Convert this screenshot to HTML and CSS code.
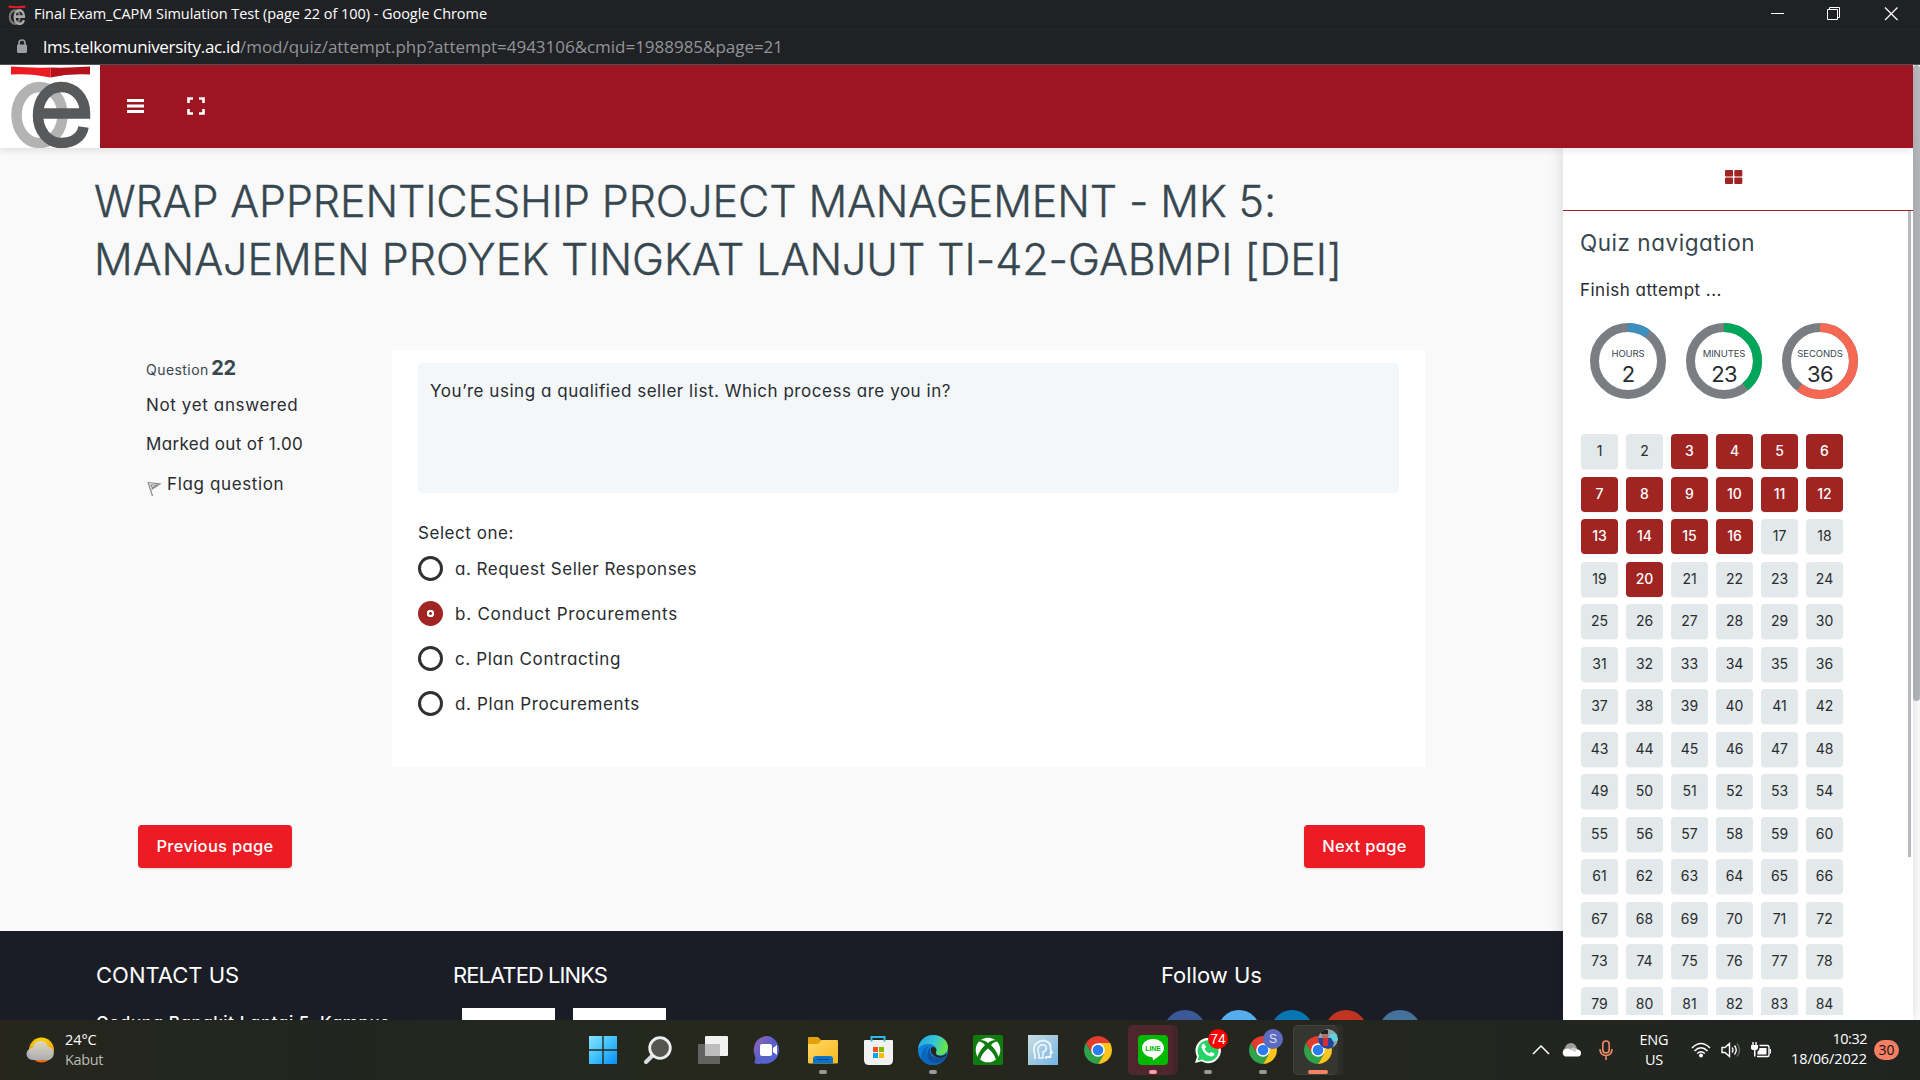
FILE: index.html
```html
<!DOCTYPE html>
<html lang="en">
<head>
<meta charset="utf-8">
<title>Final Exam_CAPM Simulation Test (page 22 of 100)</title>
<link rel="stylesheet" href="styles.css">
</head>
<body>
<svg class="defs" width="0" height="0" aria-hidden="true">
  <symbol id="logo" viewBox="0 0 100 83">
    <path d="M11 1.5Q30 3 50.500 2.500L50.500 12.500Q30 8 11 9.500Z" fill="#ed1c24"/>
    <path d="M50.500 2.500Q70 3 90 1.500V9.500Q70 8 50.500 12.500Z" fill="#b5121b"/>
    <ellipse cx="39.500" cy="50" rx="23" ry="28" fill="none" stroke="#b3b3b3" stroke-width="10.500"/>
    <path d="M39 48.500H85C85 32 74 22 61 22C48 22 38 34 38 50C38 66 48 78 61 78C73 78 82 72 83.500 62" fill="none" stroke="#58595b" stroke-width="10.500"/>
  </symbol>
  <symbol id="chrome" viewBox="-14 -14 28 28">
    <path d="M-12.100-7A14 14 0 0 1 12.100-7H0L-6.060 3.500Z" fill="#e33b2e"/>
    <path d="M12.100-7A14 14 0 0 1 0 14L6.060 3.500 0-7Z" fill="#fdc51c"/>
    <path d="M0 14A14 14 0 0 1-12.100-7L-6.060 3.500H6.060Z" fill="#2fa24c"/>
    <circle r="6.800" fill="#fff"/><circle r="5.300" fill="#2a7cf0"/>
  </symbol>
</svg>

<div class="titlebar">
  <svg class="favicon" width="20" height="20" viewBox="0 0 100 83" preserveAspectRatio="none"><path d="M8 2L50 5L92 2V11L50 14L8 11Z" fill="#e31b23"/><ellipse cx="39" cy="50" rx="25" ry="27" fill="none" stroke="#777" stroke-width="11"/><path d="M39 48H85C85 32 74 22 61 22C48 22 38 34 38 50C38 66 48 78 61 78C73 78 82 72 84 62" fill="none" stroke="#aaa" stroke-width="11"/></svg>
  <span class="win-title">Final Exam_CAPM Simulation Test (page 22 of 100) - Google Chrome</span>
  <svg class="win-ctl" width="130" height="16" viewBox="0 0 130 16" fill="none" stroke="#fff"><path d="M1 7.500H14M57.500 3.500H67.500V13.500H57.500ZM59.500 3V1.500H69.500V11.500H68"/><path d="M115 1.500L127.500 14M127.500 1.500L115 14" stroke-width="1.200"/></svg>
</div>
<div class="urlbar">
  <svg width="12" height="15" viewBox="0 0 12 15"><path d="M3 6V4a3 3 0 0 1 6 0V6" fill="none" stroke="#9aa0a6" stroke-width="1.600"/><rect x="1" y="5.500" width="10" height="8.500" rx="1.200" fill="#9aa0a6"/></svg>
  <span class="url-host">lms.telkomuniversity.ac.id</span><span class="url-path">/mod/quiz/attempt.php?attempt=4943106&amp;cmid=1988985&amp;page=21</span>
</div>

<div class="viewport">
  <div class="page">
    <header class="topbar">
      <div class="brand"><svg width="100" height="83"><use href="#logo"/></svg></div>
      <svg class="menu" width="17" height="14" viewBox="0 0 17 14"><path d="M0 1.500H17M0 7H17M0 12.500H17" stroke="#fff" stroke-width="2.800"/></svg>
      <svg class="full" width="18" height="18" viewBox="0 0 18 18"><path d="M1.500 6V1.500H6M12 1.500H16.500V6M16.500 12V16.500H12M6 16.500H1.500V12" fill="none" stroke="#fff" stroke-width="2.600"/></svg>
    </header>
    <div class="columns">
      <main class="main">
        <h1 class="course"><span class="course-a">WRAP APPRENTICESHIP PROJECT MANAGEMENT - MK 5:</span><br><span class="course-b">MANAJEMEN PROYEK TINGKAT LANJUT TI-42-GABMPI [DEI]</span></h1>
        <div class="question">
          <div class="info">
            <div class="qno"><span class="q-word">Question</span> <b class="q-num">22</b></div>
            <div class="line"><span class="state">Not yet answered</span></div>
            <div class="line"><span class="grade">Marked out of 1.00</span></div>
            <div class="line flag"><svg width="15" height="17" viewBox="0 0 15 17" fill="none" stroke="#888" stroke-width="1.200"><path d="M1 2L5.500 16M1.500 2.500L13 4 4.500 9.500M4 5L10 5 5.500 8Z"/></svg><span>Flag question</span></div>
          </div>
          <div class="card">
            <div class="stem"><span>You’re using a qualified seller list. Which process are you in?</span></div>
            <div class="prompt"><span>Select one:</span></div>
            <div class="option"><i class="radio"></i><span class="opt-a">a. Request Seller Responses</span></div>
            <div class="option"><i class="radio on"></i><span class="opt-b">b. Conduct Procurements</span></div>
            <div class="option"><i class="radio"></i><span>c. Plan Contracting</span></div>
            <div class="option"><i class="radio"></i><span>d. Plan Procurements</span></div>
          </div>
        </div>
        <div class="pager"><div class="btn prev">Previous page</div><div class="btn next">Next page</div></div>
        <footer class="footer">
          <section class="contact"><h3>CONTACT US</h3><p>Gedung Bangkit Lantai 5, Kampus</p></section>
          <section class="links"><h3>RELATED LINKS</h3><div class="logos"><i></i><i></i></div></section>
          <section class="social"><h3>Follow Us</h3><div class="circles"><i class="fb"></i><i class="tw"></i><i class="in"></i><i class="gp"></i><i class="vk"></i></div></section>
        </footer>
      </main>
      <aside class="side">
        <div class="tabs"><svg width="18" height="14" viewBox="0 0 18 14" fill="#a02422"><rect width="8" height="6.400" rx="1"/><rect x="9.300" width="8" height="6.400" rx="1"/><rect y="7.600" width="8" height="6.400" rx="1"/><rect x="9.300" y="7.600" width="8" height="6.400" rx="1"/></svg></div>
        <div class="side-body">
          <h2>Quiz navigation</h2>
          <p class="finish">Finish attempt ...</p>
          <div class="timers">
            <div class="timer"><svg width="76" height="76" viewBox="0 0 76 76"><circle class="ring" cx="38" cy="38" r="33.500"/><circle class="arc hours" cx="38" cy="38" r="33.500" pathLength="100" stroke-dasharray="10 90"/></svg><small>HOURS</small><strong>2</strong></div>
            <div class="timer"><svg width="76" height="76" viewBox="0 0 76 76"><circle class="ring" cx="38" cy="38" r="33.500"/><circle class="arc minutes" cx="38" cy="38" r="33.500" pathLength="100" stroke-dasharray="39 61"/></svg><small>MINUTES</small><strong>23</strong></div>
            <div class="timer"><svg width="76" height="76" viewBox="0 0 76 76"><circle class="ring" cx="38" cy="38" r="33.500"/><circle class="arc seconds" cx="38" cy="38" r="33.500" pathLength="100" stroke-dasharray="60.500 39.500"/></svg><small>SECONDS</small><strong>36</strong></div>
          </div>
          <div class="qgrid" id="qgrid"></div>
        </div>
        <i class="side-thumb"></i>
      </aside>
    </div>
  </div>
  <div class="scroll"><i></i></div>
</div>

<div class="taskbar">
  <div class="weather">
    <svg width="30" height="28" viewBox="0 0 30 28"><defs><linearGradient id="sun" x2="0" y2="1"><stop stop-color="#ffd400"/><stop offset="1" stop-color="#f0641e"/></linearGradient><linearGradient id="cl" x2="0" y2="1"><stop stop-color="#d9dcc8"/><stop offset="1" stop-color="#a9b0bd"/></linearGradient></defs><circle cx="15.500" cy="14" r="12.500" fill="url(#sun)"/><path d="M6.500 24a6 6 0 0 1 0-12 8 8 0 0 1 15.500-1.500 7 7 0 0 1 1 13.500Z" fill="url(#cl)" opacity=".93"/></svg>
    <div class="wtext"><span>24°C</span><br><span class="cond">Kabut</span></div>
  </div>
  <div class="apps">
    <div class="app"><svg width="30" height="30" viewBox="0 0 30 30"><defs><linearGradient id="win" x2="1" y2="1"><stop stop-color="#8ae2fb"/><stop offset=".5" stop-color="#3fc0fb"/><stop offset="1" stop-color="#0a8df5"/></linearGradient></defs><path d="M1 1H14.300V14.300H1ZM15.700 1H29V14.300H15.700ZM1 15.700H14.300V29H1ZM15.700 15.700H29V29H15.700Z" fill="url(#win)"/></svg></div>
    <div class="app"><svg width="30" height="30" viewBox="0 0 30 30"><path d="M10 20L3 27" stroke="#d9dbdd" stroke-width="4" stroke-linecap="round"/><circle cx="17" cy="13" r="10.300" fill="#54564f" stroke="#eceef0" stroke-width="2.800"/></svg></div>
    <div class="app"><svg width="30" height="30" viewBox="0 0 30 30"><rect y="9" width="22" height="20" rx="1" fill="#626261"/><rect x="7" y="1" width="23" height="20" rx="1" fill="#f1f1f1"/><path d="M7 9H22V21H7Z" fill="#bdbdbd"/></svg></div>
    <div class="app"><svg width="30" height="30" viewBox="0 0 30 30"><defs><linearGradient id="tm" x2="1" y2="1"><stop stop-color="#9a63b8"/><stop offset=".5" stop-color="#5b5fc7"/><stop offset="1" stop-color="#5368d8"/></linearGradient></defs><path d="M15 1A14 14 0 1 1 9 28.500Q5 29.500 1 28 3 25 2 21A14 14 0 0 1 15 1Z" fill="url(#tm)"/><rect x="7" y="9" width="12" height="12" rx="2" fill="#fff"/><path d="M20 13L24 10V20L20 17Z" fill="#fff"/></svg></div>
    <div class="app"><svg width="30" height="30" viewBox="0 0 30 30"><defs><linearGradient id="fo" x2="1" y2="1"><stop stop-color="#ffd966"/><stop offset="1" stop-color="#f9b81c"/></linearGradient></defs><path d="M0 3Q0 2 1 2H10L13 5H16V12H0Z" fill="#e2a00a"/><path d="M0 9H10L14 5H29Q30 5 30 6V27Q30 28.500 28.500 28.500H1.500Q0 28.500 0 27Z" fill="url(#fo)"/><path d="M5 28.500V24Q5 21 8 21H22Q25 21 25 24V28.500Z" fill="#0a74c8"/><path d="M9 24.500H21" stroke="#064a87"/></svg><b class="run"></b></div>
    <div class="app"><svg width="30" height="30" viewBox="0 0 30 30"><path d="M1 6Q1 5 2 5H29Q30 5 30 6V25Q30 30 25 30H6Q1 30 1 25Z" fill="#f1f1f1"/><path d="M8.500 6.500V2H21.500V6.500" fill="none" stroke="#2eb9ea" stroke-width="2"/><path d="M10 12H15V17H10Z" fill="#f25022"/><path d="M16 12H21V17H16Z" fill="#7fba00"/><path d="M10 18H15V23H10Z" fill="#00a4ef"/><path d="M16 18H21V23H16Z" fill="#ffb900"/></svg></div>
    <div class="app"><svg width="30" height="30" viewBox="0 0 30 30"><defs><linearGradient id="ed" x2="1" y2=".3"><stop stop-color="#1fa0de"/><stop offset=".6" stop-color="#35c7d4"/><stop offset="1" stop-color="#68e34d"/></linearGradient></defs><circle cx="15" cy="15" r="15" fill="#0f7fd8"/><path d="M0 14C1 5 8 0 15 0C24 0 30 6 30 12C30 18 25 21 20 20C17 19.500 18 18 18.500 16C19 12 15 9 11 9C6 9 2 11 0 14Z" fill="url(#ed)"/><path d="M11 11C6 15 9 26 17 27Q22 28 28 22C24 31 12 33 6 27C1 22 3 13 11 11Z" fill="#0b66bd"/><path d="M12 13C10 21 17 25 28 21C25 28 17 30 12 26C8 22 9 15 12 13Z" fill="#124f9c"/><path d="M13 13Q17 10 18.500 15Q17 18 19 20Q24 23 29 18L28 21Q20 25 15 20Q12 17 13 13Z" fill="#24261e"/></svg><b class="run"></b></div>
    <div class="app"><svg width="30" height="30" viewBox="0 0 30 30"><rect width="30" height="30" rx="2" fill="#107c10"/><circle cx="15" cy="15" r="12.300" fill="#fff"/><path d="M7 5Q12 5 15 8Q18 5 23 5L24.500 6.500Q21 6.500 18 10Q24 16 25.500 22L23 25Q21 18 15 13.500Q9 18 7 25L4.500 22Q6 16 12 10Q9 6.500 5.500 6.500Z" fill="#107c10"/></svg></div>
    <div class="app"><svg width="30" height="30" viewBox="0 0 30 30"><defs><linearGradient id="fc" x2="1" y2="1"><stop stop-color="#c9dde0"/><stop offset="1" stop-color="#74b4e4"/></linearGradient></defs><rect width="30" height="30" fill="url(#fc)"/><path d="M7 24V20Q4 12 9 8Q15 3 21 8Q23 10 22.500 14L24 17.500H22.500V22H18V24" fill="none" stroke="#eef8ff" stroke-width="1.800"/><path d="M11 23V19Q8 12 13 10Q18 9 18.500 13Q18 16 15 17V23Z" fill="none" stroke="#eef8ff" stroke-width="1.600"/></svg></div>
    <div class="app"><svg width="28" height="28"><use href="#chrome"/></svg></div>
    <div class="app line-app"><svg width="30" height="30" viewBox="0 0 30 30"><rect width="30" height="30" rx="4" fill="#00b900"/><path d="M15 4C22 4 26 8.500 26 13C26 19 18 23 15 25.500C14.500 25 15.500 22.500 14 22.300C8 21.500 4 17.500 4 13C4 8.500 8 4 15 4Z" fill="#fff"/><text x="15" y="16" class="line-txt">LINE</text></svg><b class="run pink"></b></div>
    <div class="app"><svg width="30" height="30" viewBox="0 0 30 30"><path d="M2 28L4 21.500A12.700 12.700 0 1 1 8.500 26.300Z" fill="#fff"/><path d="M4.500 25.700L6 21A10.500 10.500 0 1 1 9.300 24.500Z" fill="#25d366"/><path d="M11 8.500L13 12 11.500 14Q13 17 16.500 18.500L18 17 21.500 18.500Q21.500 21.500 18 21.500Q11 20 8.500 12.500Q8.500 9 11 8.500Z" fill="#fff"/></svg><span class="badge red">74</span><b class="run"></b></div>
    <div class="app"><svg width="28" height="28"><use href="#chrome"/></svg><span class="badge blue">S</span><b class="run"></b></div>
    <div class="app active"><svg width="28" height="28"><use href="#chrome"/></svg><svg class="badge" width="20" height="20" viewBox="0 0 20 20"><defs><clipPath id="av"><circle cx="10" cy="10" r="10"/></clipPath></defs><g clip-path="url(#av)"><path d="M0 0H20V20H0Z" fill="#8fa3ab"/><path d="M12 5H20V12H12Z" fill="#5ed2e0"/><path d="M4 3H10V9H4Z" fill="#a87360"/><path d="M3 1H10V5H3Z" fill="#262029"/><path d="M0 9H13L16 14 14 20H0Z" fill="#27449b"/><path d="M5 9H10V17H5Z" fill="#d72d3a"/></g></svg><b class="run wide"></b></div>
  </div>
  <div class="tray">
    <svg class="chev" width="18" height="10" viewBox="0 0 18 10"><path d="M1 9L9 1 17 9" fill="none" stroke="#fff" stroke-width="1.500"/></svg>
    <svg class="cloud" width="20" height="14" viewBox="0 0 20 14"><path d="M4 12A4 4 0 0 1 4 5 6 6 0 0 1 15 3L17 8Z" fill="#9e9f9d"/><path d="M4 13.500A4 4 0 0 1 3.500 6.500Q7 4.500 10 7L15 6Q20 6.500 20 10 20 13.500 17 13.500Z" fill="#fff"/><path d="M9 6.500Q12 2.500 16 6.500L14 9Z" fill="#cfcfcf"/></svg>
    <svg class="mic" width="14" height="20" viewBox="0 0 14 20" fill="none" stroke="#f08a66" stroke-width="1.600"><rect x="3.800" y="1" width="6.400" height="12" rx="3.200"/><path d="M1 9Q1 15.500 7 15.500T13 9M7 15.500V20"/></svg>
    <div class="lang">ENG<br>US</div>
    <svg class="wifi" width="20" height="16" viewBox="0 0 20 16" fill="none" stroke="#fff" stroke-width="1.600"><path d="M1 6Q10-3 19 6M3.500 9Q10 2.500 16.500 9M6.200 11.500Q10 8 13.800 11.500"/><circle cx="10" cy="13.500" r="2" fill="#fff" stroke="none"/></svg>
    <svg class="vol" width="20" height="16" viewBox="0 0 20 16" fill="none" stroke="#fff" stroke-width="1.400"><path d="M1 5.500H4L8.500 1.500V14.500L4 10.500H1ZM11 5.500Q13 8 11 10.500M13.500 3.500Q17 8 13.500 12.500"/><path d="M16 1.500Q21 8 16 14.500" stroke="#666"/></svg>
    <svg class="bat" width="20" height="16" viewBox="0 0 20 16"><path d="M2 0V3M5 0V3" stroke="#fff" stroke-width="1.400"/><path d="M0 3H7V6Q7 8 4.500 8V14.500H3V8Q0 8 0 6Z" fill="#fff"/><path d="M8.500 3.500H16.500Q18 3.500 18 5V13Q18 14.500 16.500 14.500H6" fill="none" stroke="#fff" stroke-width="1.400"/><path d="M8.500 6H15.500V12.500H6.500V9.500Q8.500 9 8.500 6Z" fill="#fff"/><path d="M19.300 7V11.500" stroke="#fff" stroke-width="1.400"/></svg>
    <div class="clock"><span class="time">10:32</span><br><span>18/06/2022</span></div>
    <span class="count">30</span>
  </div>
</div>
<script src="app.js"></script>
</body>
</html>
```
FILE: styles.css
```css
*{box-sizing:border-box;margin:0;padding:0}
body{width:1920px;height:1080px;overflow:hidden;display:flex;flex-direction:column;background:#f9f9f9;color:#282c30;font-family:Inter,"Open Sans",sans-serif;font-feature-settings:"cv11";font-weight:400}
svg{display:block;flex:none}
span,small,strong{white-space:nowrap}
.defs{position:absolute}
.titlebar{height:30px;background:#202124;border-bottom:1px solid #25272a;display:flex;align-items:center;padding:0 20px 2px 7px;color:#fff;font:400 14.500px "Open Sans",sans-serif;font-feature-settings:normal;letter-spacing:-.053px}
.favicon{margin:2px 7px 0 0}
.win-ctl{margin-left:auto}
.urlbar{height:35px;background:#202124;border-bottom:1px solid #4f5356;display:flex;align-items:center;padding:0 0 1px 16px;font:400 17px "Open Sans",sans-serif;font-feature-settings:normal}
.urlbar svg{margin-right:15px}
.url-host{color:#fff;letter-spacing:-.335px}
.url-path{color:#90959a;letter-spacing:-.025px}
.viewport{height:955px;display:flex;overflow:hidden}
.page{width:1913px;display:flex;flex-direction:column}
.scroll{width:7px;background:#fff}
.scroll i{display:block;height:636px;background:#b8b9be;border-radius:4px}
.topbar{height:83px;background:#9d1520;display:flex;align-items:center;box-shadow:0 1px 8px rgba(0,0,0,.14);position:relative;z-index:2}
.brand{width:100px;height:83px;background:#fff}
.menu{margin:0 0 2px 27px}
.full{margin:0 0 2px 43px}
.columns{display:flex;height:872px}
.main{width:1563px;display:flex;flex-direction:column}
.course{padding:24px 0 0 94px;height:140px;font-size:43px;line-height:58px;font-weight:300;color:#37474f;-webkit-text-stroke:.35px #37474f}
.course-a{letter-spacing:-.123px}
.course-b{letter-spacing:-.054px}
.question{display:flex;margin-top:62px;height:417px}
.info{width:392px;padding-left:146px;font-size:17px;letter-spacing:.63px}
.qno{height:36px;line-height:37px;font-size:14px;color:#37474f}
.q-word{letter-spacing:.45px}
.q-num{font-size:20px;font-weight:700;letter-spacing:-.5px;margin-left:-2px}
.line{height:39.300px;line-height:39px}
.grade{letter-spacing:.324px}
.flag{display:flex;align-items:center}
.flag svg{margin:8px 5px 0 1px}
.card{width:1033px;background:#fff;padding:13px 26px;font-size:17px}
.stem{height:130px;background:#f3f7fa;border-radius:4px;padding:15px 12px;line-height:26px;letter-spacing:.534px}
.prompt{margin-top:27px;line-height:26px;letter-spacing:.55px}
.option{display:flex;align-items:center;gap:12px;height:45px;letter-spacing:.62px}
.opt-a{letter-spacing:.496px}
.opt-b{letter-spacing:.764px}
.radio{width:25px;height:25px;border-radius:50%;border:3px solid #303030}
.radio.on{border:0;background:radial-gradient(circle,#a02422 0 1.200px,#fff 1.600px 3.500px,#a02422 4px)}
.pager{display:flex;justify-content:space-between;margin-top:58px;padding:0 138px}
.btn{height:43px;line-height:41px;border-radius:4px;background:#ed1c24;border-top:1px solid #d5202a;color:#fff;font-size:16.500px;font-weight:500;letter-spacing:.3px;text-align:center;box-shadow:0 1px 2px rgba(0,0,0,.12)}
.prev{width:154px}
.next{width:121px}
.footer{margin-top:63px;height:89px;background:#1b1d26;color:#fff;display:flex;overflow:hidden;padding-left:96px}
.footer h3{font-size:22px;line-height:30px;font-weight:400;margin-top:29px;white-space:nowrap}
.contact{width:356px}
.contact p{font-size:17px;font-weight:500;line-height:26px;margin-top:20px;letter-spacing:.559px}
.links{width:709px;padding-left:1px}
.links h3{letter-spacing:-.94px}
.logos{display:flex;gap:18px;padding:18px 0 0 9px}
.logos i{width:93px;height:50px;background:#fff}
.circles{display:flex;gap:11.700px;padding:20px 0 0 3px}
.circles i{width:42px;height:42px;border-radius:50%}
.fb{background:#3b5998}.tw{background:#55acee}.in{background:#0976b4}.gp{background:#c23321}.vk{background:#45729b}
.side{width:350px;background:#fff;box-shadow:0 0 14px rgba(0,0,0,.16);position:relative}
.tabs{height:63px;border-bottom:1px solid #a02422;display:flex;justify-content:center;padding:22px 8px 0 0}
.side-body{height:804px;overflow:hidden;padding-left:17px}
.side h2{font-size:22.500px;font-weight:400;line-height:30px;margin-top:17px;color:#37474f;letter-spacing:.529px}
.finish{font-size:17px;line-height:26px;margin-top:19px;letter-spacing:.482px}
.timers{display:flex;gap:20px;padding:20px 0 0 10px}
.timer{width:76px;height:76px;display:grid;justify-items:center;grid-template-rows:25px 12px 26px}
.timer>*{grid-column:1}
.timer svg{grid-row:1/4}
.timer small{grid-row:2;font-size:9.500px;line-height:12px;color:#37474f;letter-spacing:-.1px}
.timer strong{grid-row:3;font-size:22px;font-weight:400;line-height:28px;letter-spacing:-.7px}
.ring,.arc{fill:none;stroke-width:9;stroke:#7a7d82}
.arc{transform:rotate(-90deg);transform-origin:center}
.hours{stroke:#3d8fc0}.minutes{stroke:#00a65a}.seconds{stroke:#f56954}
.qgrid{display:grid;grid-template-columns:repeat(6,37px);grid-auto-rows:35px;gap:7.500px 8px;margin:35px 0 0 1px}
.qgrid i{font-style:normal;font-size:14px;line-height:34px;text-align:center;border-radius:4px;background:#e3e8ea;box-shadow:0 1px 1px rgba(0,0,0,.05)}
.qgrid i.done{background:#a02422;color:#fff;font-weight:500}
.side-thumb{position:absolute;right:2px;top:63px;width:3px;height:646px;background:#b8b9be}
.taskbar{height:60px;background:linear-gradient(90deg,#26261d,#20261f 17%,#26281d 38%,#23251f 75%,#202421);display:flex;align-items:center;color:#fff;font-family:"Open Sans",sans-serif;font-feature-settings:normal;font-size:14.500px;line-height:20px;letter-spacing:-.1px}
.weather{width:575px;display:flex;align-items:center;gap:9px;padding-left:26px}
.cond{color:#b9bbb5;letter-spacing:-.375px}
.wtext{margin-top:0}
.apps{display:flex}
.app{width:55px;height:60px;display:grid;place-items:center;position:relative}
.run{position:absolute;bottom:6px;width:8px;height:4px;border-radius:2px;background:#999a97}
.run.pink{background:#ff9aa6}
.run.wide{width:20px;background:#f4845f}
.line-app::before,.active::before{content:"";position:absolute;left:3px;top:5px;width:50px;height:50px;border-radius:5px;background:#4d272b;box-shadow:inset -5px 0 #432529}
.active::before{background:#353630;box-shadow:inset -5px 0 #2c2d28,inset 0 0 0 1px #42433d}
.app>svg{position:relative}
.line-txt{font:700 7px "Liberation Sans",sans-serif;text-anchor:middle;fill:#00b900}
.app>.badge{position:absolute;left:28px;top:9px;width:20px;height:20px;border-radius:50%;text-align:center}
.red{background:#f00;font:400 14px/20px "Liberation Sans",sans-serif}
.blue{background:#5c6bc0;font:400 12px/20px "Liberation Sans",sans-serif;color:#dfe3f8}
.tray{display:flex;align-items:center;margin-left:187px}
.cloud{margin-left:11px}
.mic{margin-left:18px}
.lang{width:78px;padding-left:4px;text-align:center;margin-top:-1px;letter-spacing:-.17px}
.vol{margin-left:10px}
.bat{margin-left:10px}
.clock{width:96px;text-align:right;margin-top:-2px}
.time{letter-spacing:-.5px}
.count{width:25px;height:20px;border-radius:10px;background:#f57f63;color:#111;text-align:center;margin-left:7px;font-size:14px}
```
FILE: app.js
```js
// Question buttons: answered ones are filled.
const done = new Set([3,4,5,6,7,8,9,10,11,12,13,14,15,16,20]);
const grid = document.getElementById('qgrid');
for (let n = 1; n <= 84; n++) {
  const cell = document.createElement('i');
  cell.textContent = n;
  if (done.has(n)) cell.className = 'done';
  grid.append(cell);
}
```
